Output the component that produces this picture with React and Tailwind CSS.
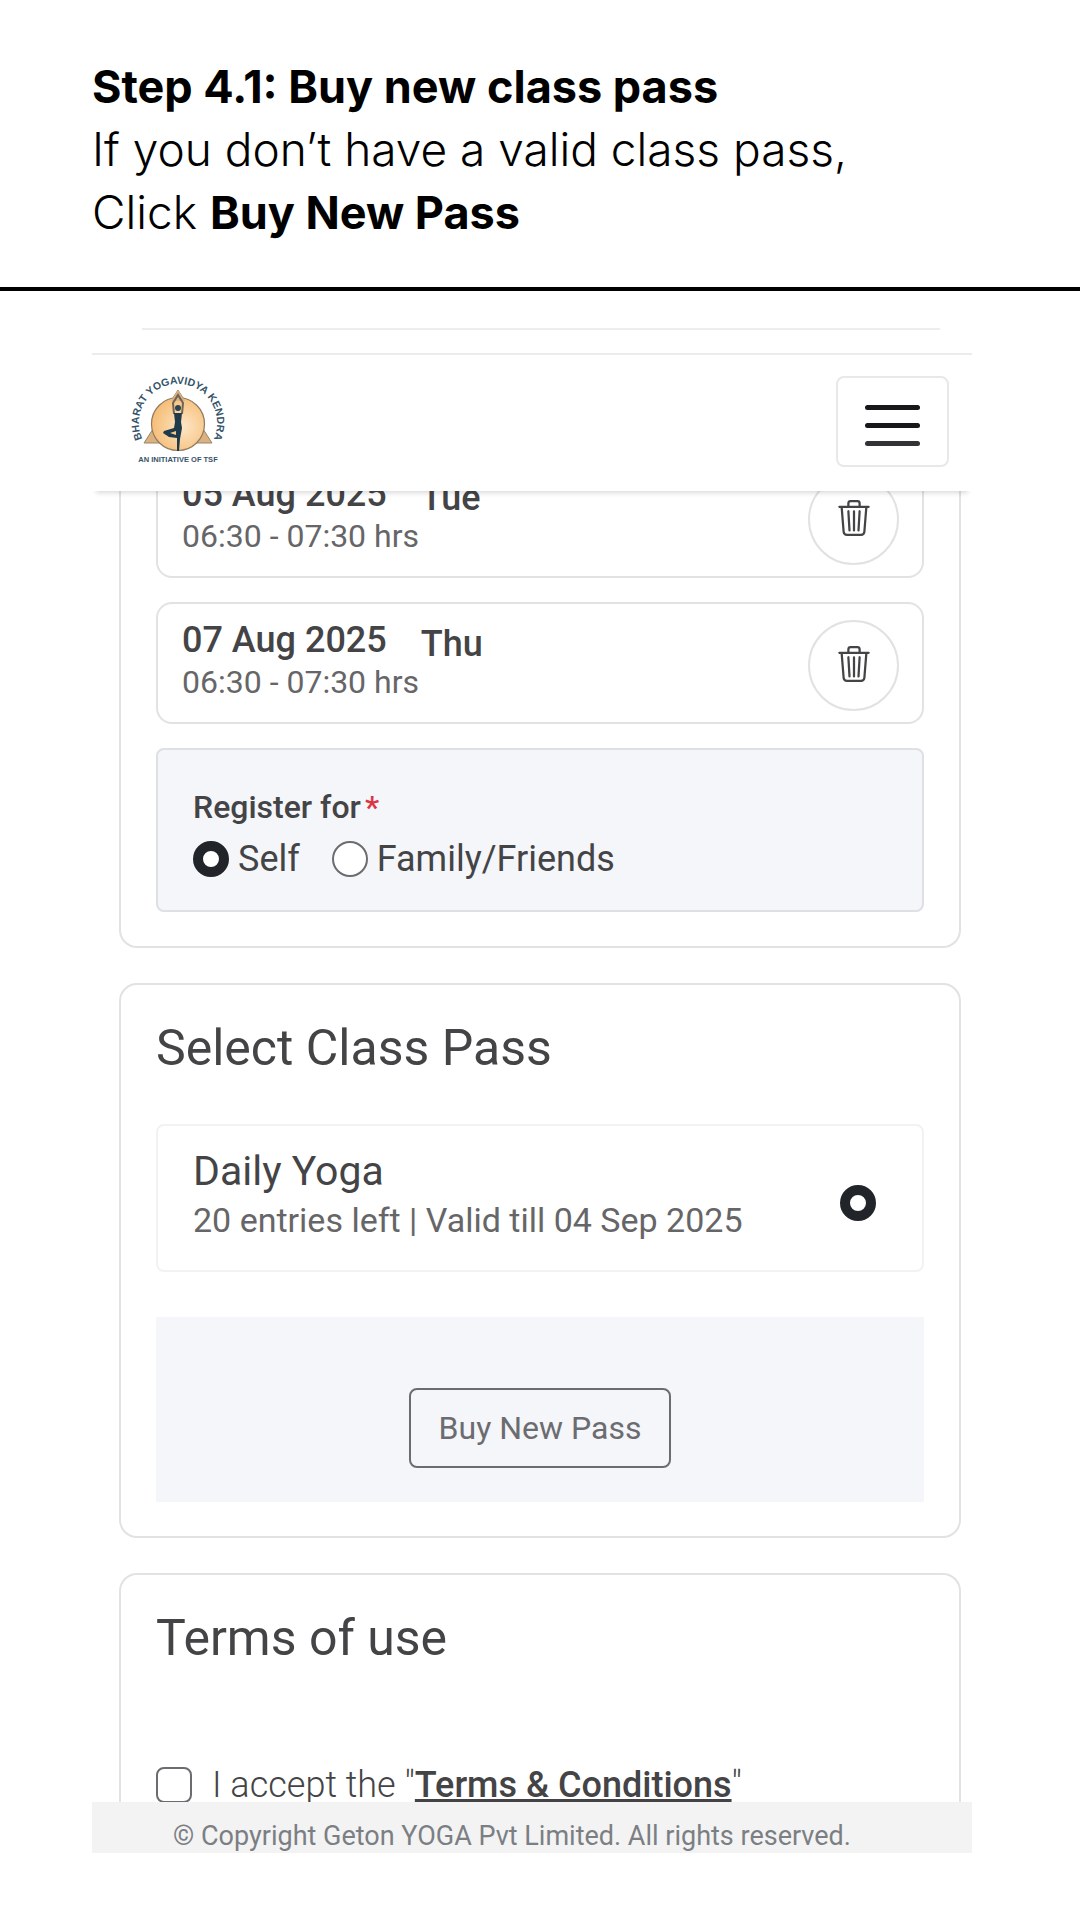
import { BsTrash3 } from "react-icons/bs";

function Logo() {
  return (
    <svg viewBox="0 0 100 92" className="h-[92px] w-[100px] overflow-visible" role="img" aria-label="Bharat Yogavidya Kendra">
      <defs>
        <path id="logo-arc" d="M 16 66 A 39 39 0 1 1 84 66" />
        <radialGradient id="logo-sun" cx="0.6" cy="0.55" r="0.6">
          <stop offset="0" stopColor="#fde6c6" />
          <stop offset="1" stopColor="#f6bd76" />
        </radialGradient>
      </defs>
      <path d="M50 14 L84 67 H16 Z" fill="#dcb180" stroke="#9b8468" strokeWidth="1" />
      <circle cx="50" cy="48" r="26.5" fill="url(#logo-sun)" stroke="#8e7b63" strokeWidth="1.2" />
      <path d="M50 14 L57 25 H43 Z" fill="#dcb180" />
      <path d="M46 38 L45 27 L50 19 L55 27 L54 38" fill="none" stroke="#6e6457" strokeWidth="2" />
      <circle cx="50" cy="32" r="3" fill="#2c4352" />
      <path
        d="M46 37 H54 L53 46 L54 52 L52 63 L51 75 H49 L49 62 L41 61 L35 57 L36 55 L46 52 L47 46 Z"
        fill="#1f3a4a"
      />
      <path d="M42 57 L48 55 L48 59 Z" fill="#f6c98d" />
      <text fontFamily="'Liberation Sans', sans-serif" fontSize="10.5" fontWeight="700" fill="#35546a">
        <textPath href="#logo-arc" startOffset="50%" textAnchor="middle">
          BHARAT YOGAVIDYA KENDRA
        </textPath>
      </text>
      <text
        x="50"
        y="86"
        textAnchor="middle"
        fontFamily="'Liberation Sans', sans-serif"
        fontSize="7.5"
        fontWeight="700"
        fill="#35546a"
      >
        AN INITIATIVE OF TSF
      </text>
    </svg>
  );
}

function SlotRow({ date, day, time }) {
  return (
    <li className="flex h-[122px] items-start justify-between rounded-2xl border-2 border-[#e2e2e2] pt-4 pr-[23px] pl-6">
      <div>
        <div className="flex gap-[34px] text-[36px] leading-10 font-medium text-[#444446]">
          <span>{date}</span>
          <span className="pt-1">{day}</span>
        </div>
        <p className="text-[32px] leading-9 text-[#666668]">{time}</p>
      </div>
      <button
        type="button"
        aria-label={`Remove ${date}`}
        className="flex size-[91px] items-center justify-center rounded-full border-2 border-[#e2e2e2] pb-1 text-[#444446]"
      >
        <BsTrash3 className="size-9" />
      </button>
    </li>
  );
}

const radioClass =
  "size-9 shrink-0 appearance-none rounded-full border-2 border-[#6c6c70] bg-white checked:border-10 checked:border-[#212429]";

export default function App() {
  return (
    <div className="min-h-screen bg-white font-[Roboto,sans-serif] text-[#444446]">
      <header className="border-b-4 border-black pt-[55px] pb-[43px] pl-[92px] font-[Inter,sans-serif] leading-[63px] text-black">
        <h1 className="text-[45px] leading-[63px] font-bold">Step 4.1: Buy new class pass</h1>
        <p className="text-[46px] leading-[63px] font-light">
          If you don’t have a valid class pass,
          <br />
          Click <strong className="text-[45px] leading-[63px] font-bold">Buy New Pass</strong>
        </p>
      </header>

      <div className="mr-[108px] ml-[92px] pt-[37px]">
        <div className="mr-8 ml-[50px] h-[25px] border-t-2 border-[#ededed]" />
        <nav className="relative z-10 flex h-[138px] items-start justify-between border-t-2 border-[#ececec] bg-white pt-[21px] pr-[23px] pl-9 shadow-[0_6px_5px_-4px_rgba(0,0,0,0.15)]">
          <a href="#home" className="block">
            <Logo />
          </a>
          <button
            type="button"
            aria-label="Open menu"
            className="flex h-[91px] w-[113px] flex-col items-center justify-center gap-[13px] rounded-lg border-2 border-[#e8e8e8] pt-2"
          >
            <span className="h-[5px] w-[55px] rounded-full bg-[#18181a]" />
            <span className="h-[5px] w-[55px] rounded-full bg-[#18181a]" />
            <span className="h-[5px] w-[55px] rounded-full bg-[#333335]" />
          </button>
        </nav>

        <main className="mr-[11px] ml-[27px] flex flex-col gap-[35px]">
          <section className="-mt-[35px] rounded-b-[18px] border-2 border-t-0 border-[#e2e2e2] px-[35px] pb-[34px]">
            <ul className="flex flex-col gap-6">
              <SlotRow date="05 Aug 2025" day="Tue" time="06:30 - 07:30 hrs" />
              <SlotRow date="07 Aug 2025" day="Thu" time="06:30 - 07:30 hrs" />
            </ul>
            <fieldset className="mt-6 h-[164px] rounded-lg border-2 border-[#dfe0e3] bg-[#f4f6fa] px-[35px] pt-[37px]">
              <div className="flex gap-1 text-[32px] leading-10 font-medium">
                <span>Register for</span>
                <span className="text-[#dc3545]">*</span>
              </div>
              <div className="mt-[10px] flex gap-8 text-[36px] leading-[44px]">
                <label className="flex items-center gap-[9px]">
                  <input type="radio" name="who" defaultChecked className={radioClass} />
                  Self
                </label>
                <label className="flex items-center gap-[9px]">
                  <input type="radio" name="who" className={radioClass} />
                  Family/Friends
                </label>
              </div>
            </fieldset>
          </section>

          <section className="rounded-[18px] border-2 border-[#e2e2e2] px-[35px] pt-[33px] pb-[34px]">
            <h2 className="text-[50px] leading-[60px]">Select Class Pass</h2>
            <label className="mt-[46px] flex h-[148px] items-center justify-between rounded-lg border-2 border-[#f2f2f2] pr-[46px] pl-[35px]">
              <span className="pb-1">
                <span className="block text-[41px] leading-[48px]">Daily Yoga</span>
                <span className="block text-[34px] leading-[50px] text-[#666668]">
                  20 entries left | Valid till 04 Sep 2025
                </span>
              </span>
              <input type="radio" name="pass" defaultChecked className={radioClass + " mt-[10px]"} />
            </label>
            <div className="mt-[45px] flex justify-center bg-[#f4f6fa] pt-[71px] pb-[34px]">
              <button
                type="button"
                className="h-20 rounded-lg border-2 border-[#6c6c70] px-7 text-[32px] text-[#6c6c70]"
              >
                Buy New Pass
              </button>
            </div>
          </section>

          <section className="rounded-t-[18px] border-2 border-b-0 border-[#e2e2e2] px-[35px] pt-[33px]">
            <h2 className="text-[50px] leading-[60px]">Terms of use</h2>
            <div className="mt-[95px] flex items-center gap-5 text-[36px] leading-[44px] font-light">
              <input
                type="checkbox"
                id="accept"
                className="size-9 shrink-0 appearance-none rounded-lg border-2 border-[#6c6c70] bg-white"
              />
              <label htmlFor="accept">
                I accept the "
                <a href="#terms" className="font-medium underline">
                  Terms &amp; Conditions
                </a>
                "
              </label>
            </div>
          </section>
        </main>

        <footer className="relative z-10 -mt-[5px] h-[51px] bg-[#f3f3f3] pt-[18px] pr-10 text-center text-[27px] leading-8 text-[#7b7f84]">
          © Copyright Geton YOGA Pvt Limited. All rights reserved.
        </footer>
      </div>
    </div>
  );
}
